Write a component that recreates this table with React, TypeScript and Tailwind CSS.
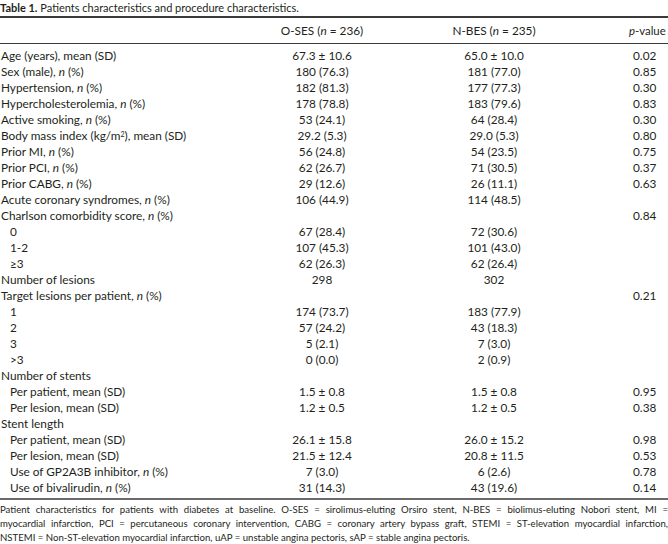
import type { ReactNode } from 'react';

type Row = {
    label: ReactNode;
    a?: string;
    b?: string;
    p?: string;
    indent?: boolean;
};

const n = <span className="italic">n</span>;

const rows: Row[] = [
    { label: 'Age (years), mean (SD)', a: '67.3 ± 10.6', b: '65.0 ± 10.0', p: '0.02' },
    { label: <>Sex (male), {n} (%)</>, a: '180 (76.3)', b: '181 (77.0)', p: '0.85' },
    { label: <>Hypertension, {n} (%)</>, a: '182 (81.3)', b: '177 (77.3)', p: '0.30' },
    { label: <>Hypercholesterolemia, {n} (%)</>, a: '178 (78.8)', b: '183 (79.6)', p: '0.83' },
    { label: <>Active smoking, {n} (%)</>, a: '53 (24.1)', b: '64 (28.4)', p: '0.30' },
    {
        label: <>Body mass index (kg/m<sup className="text-[7px]">2</sup>), mean (SD)</>,
        a: '29.2 (5.3)', b: '29.0 (5.3)', p: '0.80',
    },
    { label: <>Prior MI, {n} (%)</>, a: '56 (24.8)', b: '54 (23.5)', p: '0.75' },
    { label: <>Prior PCI, {n} (%)</>, a: '62 (26.7)', b: '71 (30.5)', p: '0.37' },
    { label: <>Prior CABG, {n} (%)</>, a: '29 (12.6)', b: '26 (11.1)', p: '0.63' },
    { label: <>Acute coronary syndromes, {n} (%)</>, a: '106 (44.9)', b: '114 (48.5)' },
    { label: <>Charlson comorbidity score, {n} (%)</>, p: '0.84' },
    { label: '0', a: '67 (28.4)', b: '72 (30.6)', indent: true },
    { label: '1-2', a: '107 (45.3)', b: '101 (43.0)', indent: true },
    { label: '≥3', a: '62 (26.3)', b: '62 (26.4)', indent: true },
    { label: 'Number of lesions', a: '298', b: '302' },
    { label: <>Target lesions per patient, {n} (%)</>, p: '0.21' },
    { label: '1', a: '174 (73.7)', b: '183 (77.9)', indent: true },
    { label: '2', a: '57 (24.2)', b: '43 (18.3)', indent: true },
    { label: '3', a: '5 (2.1)', b: '7 (3.0)', indent: true },
    { label: '>3', a: '0 (0.0)', b: '2 (0.9)', indent: true },
    { label: 'Number of stents' },
    { label: 'Per patient, mean (SD)', a: '1.5 ± 0.8', b: '1.5 ± 0.8', p: '0.95', indent: true },
    { label: 'Per lesion, mean (SD)', a: '1.2 ± 0.5', b: '1.2 ± 0.5', p: '0.38', indent: true },
    { label: 'Stent length' },
    { label: 'Per patient, mean (SD)', a: '26.1 ± 15.8', b: '26.0 ± 15.2', p: '0.98', indent: true },
    { label: 'Per lesion, mean (SD)', a: '21.5 ± 12.4', b: '20.8 ± 11.5', p: '0.53', indent: true },
    { label: <>Use of GP2A3B inhibitor, {n} (%)</>, a: '7 (3.0)', b: '6 (2.6)', p: '0.78', indent: true },
    { label: <>Use of bivalirudin, {n} (%)</>, a: '31 (14.3)', b: '43 (19.6)', p: '0.14', indent: true },
];

const cols = 'grid grid-cols-[250px_144px_200px_74px] items-center';

export default function App() {
    return (
        <div className="w-[668px] h-[544px] bg-white text-[#231f20] font-['Lato',sans-serif] overflow-hidden">
            {/* Caption */}
            <div className="h-[16px] pt-px text-[11px] leading-[13px] whitespace-nowrap">
                <span className="font-bold">Table 1.</span> Patients characteristics and procedure characteristics.
            </div>
            <div className="h-[2px] bg-[#3a3a3a]" />

            {/* Header */}
            <div className={`${cols} h-[25px] text-[11.8px] whitespace-nowrap`}>
                <div />
                <div className="text-center">
                    O-SES (<span className="italic">n</span> = 236)
                </div>
                <div className="text-center">
                    N-BES (<span className="italic">n</span> = 235)
                </div>
                <div className="pl-[35px] text-[11.4px]">
                    <span className="italic">p</span>-value
                </div>
            </div>
            <div className="h-px bg-[#3a3a3a]" />

            {/* Body */}
            <div className="pt-[4px] text-[11.8px]">
                {rows.map((r, i) => (
                    <div key={i} className={`${cols} h-[16px] leading-[16px] whitespace-nowrap`}>
                        <div className={r.indent ? 'pl-[10px]' : 'pl-px'}>{r.label}</div>
                        <div className="text-center">{r.a}</div>
                        <div className="text-center">{r.b}</div>
                        <div className="pl-[39px]">{r.p}</div>
                    </div>
                ))}
            </div>
            <div className="mt-[2px] h-[2px] bg-[#6a6a6a]" />

            {/* Footnote */}
            <div className="pt-[3px] text-[9.6px] leading-[14px] whitespace-nowrap">
                <div className="[text-align-last:justify]">
                    Patient characteristics for patients with diabetes at baseline. O-SES = sirolimus-eluting Orsiro stent, N-BES = biolimus-eluting Nobori stent, MI =
                </div>
                <div className="[text-align-last:justify]">
                    myocardial infarction, PCI = percutaneous coronary intervention, CABG = coronary artery bypass graft, STEMI = ST-elevation myocardial infarction,
                </div>
                <div>
                    NSTEMI = Non-ST-elevation myocardial infarction, uAP = unstable angina pectoris, sAP = stable angina pectoris.
                </div>
            </div>
        </div>
    );
}
